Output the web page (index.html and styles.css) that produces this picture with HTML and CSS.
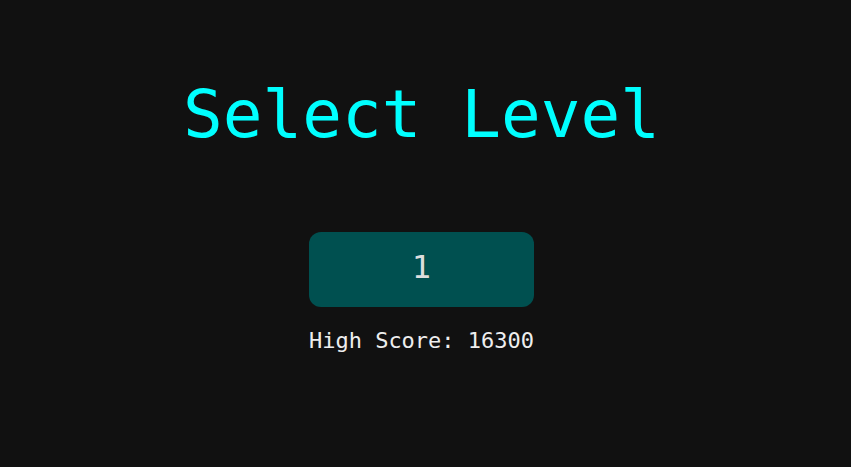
FILE: index.html
```html
<!DOCTYPE html>
<html>
<head>
<meta charset="utf-8">
<link rel="stylesheet" href="styles.css">
</head>
<body>
<main class="screen">
  <h1 class="title">Select Level</h1>
  <div class="levels">
    <button class="level-btn">1</button>
    <p class="score">High Score: 16300</p>
  </div>
</main>
</body>
</html>
```
FILE: styles.css
```css
html, body {
  margin: 0;
  padding: 0;
  background: #111111;
  height: 100%;
}
.screen {
  display: flex;
  flex-direction: column;
  align-items: center;
  font-family: "DejaVu Sans Mono", monospace;
  padding-top: 77px;
  padding-right: 8px;
}
.title {
  margin: 0;
  color: #00ffff;
  font-size: 66px;
  font-weight: normal;
  line-height: 76px;
}
.levels {
  display: flex;
  flex-direction: column;
  align-items: center;
  margin-top: 79px;
}
.level-btn {
  width: 225px;
  height: 75px;
  border: none;
  border-radius: 12px;
  background: #005050;
  color: #dddddd;
  font-family: "DejaVu Sans Mono", monospace;
  font-size: 32px;
  padding: 0 0 5px;
}
.score {
  margin: 20px 0 0;
  color: #eeeeee;
  font-size: 22px;
  line-height: 28px;
}
```
